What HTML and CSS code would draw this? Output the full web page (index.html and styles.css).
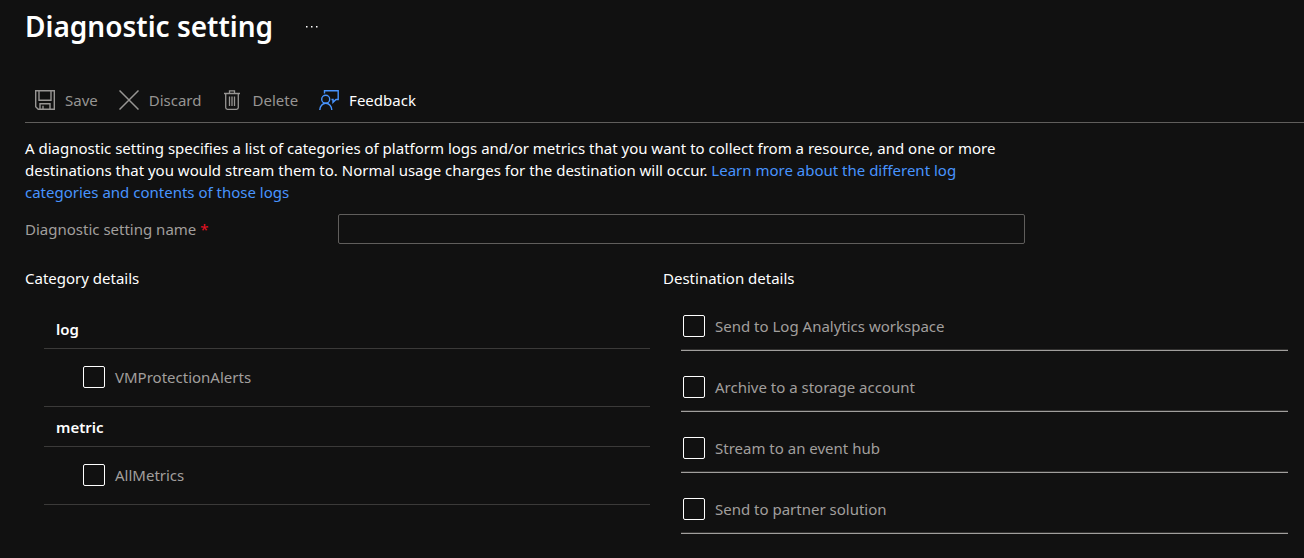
FILE: index.html
```html
<!DOCTYPE html>
<html lang="en">
<head>
<meta charset="utf-8">
<meta name="viewport" content="width=device-width, initial-scale=1">
<title>Diagnostic setting</title>
<link rel="stylesheet" href="styles.css">
</head>
<body>
<header class="header">
  <h1 class="title">Diagnostic setting</h1>
  <button class="more" type="button" aria-label="More actions">
    <svg width="16" height="4" viewBox="0 0 16 4" fill="#fff"><path d="M1 2h1.500v1.500H1zM6 2h1.500v1.500H6zM11 2h1.500v1.500H11z"/></svg>
  </button>
</header>
<div class="toolbar" role="toolbar" aria-label="Diagnostic setting actions">
  <button class="command" type="button" disabled>
    <svg class="icon" viewBox="0 0 20 20" fill="none" stroke="currentColor" stroke-width="1.4"><path d="M.7.7h18.6v18.6H3.2L.7 16.8zM4 .7v9.6h12V.7M5 19.3v-5.6h10v5.6M8 19v-3.2"/></svg>
    Save
  </button>
  <button class="command" type="button" disabled>
    <svg class="icon" viewBox="0 0 20 20" fill="none" stroke="currentColor" stroke-width="1.5"><path d="M.5.5l19 19M19.500.5l-19 19"/></svg>
    Discard
  </button>
  <button class="command" type="button" disabled>
    <svg class="icon" viewBox="0 0 20 20" fill="none" stroke="currentColor" stroke-width="1.3"><path d="M2 3.500h16M7.500 3.500V.8h5v2.700M3.700 3.500v14q0 1.800 1.800 1.800h9q1.800 0 1.800-1.800v-14M7.500 6.500v9.500M10 6.500v9.500M12.500 6.500v9.500"/></svg>
    Delete
  </button>
  <button class="command command-active" type="button">
    <svg class="icon icon-blue" viewBox="0 0 20 20" fill="none" stroke="currentColor" stroke-width="1.4"><path d="M5.500 3.500V.8h13.700v8.700h-2.200l-3 2.800V9.500h-1.500"/><circle cx="6.700" cy="9.300" r="4"/><path d="M.8 20c0-3.900 2.700-6.700 6-6.700s6 2.800 6 6.700"/></svg>
    Feedback
  </button>
</div>
<main class="content">
  <div class="intro">
    <p class="description">A diagnostic setting specifies a list of categories of platform logs and/or metrics that you want to collect from a resource, and one or more destinations that you would stream them to. Normal usage charges for the destination will occur. <a class="link" href="#">Learn more about the different log categories and contents of those logs</a></p>
    <div class="field">
      <label class="field-label" for="setting-name">Diagnostic setting name <span class="required">*</span></label>
      <input class="text-input" id="setting-name" type="text" required>
    </div>
  </div>
  <div class="columns">
    <section>
      <h2 class="section-title">Category details</h2>
      <div class="categories">
        <h3 class="group-title">log</h3>
        <div class="category"><label class="option"><input class="checkbox" type="checkbox">VMProtectionAlerts</label></div>
        <h3 class="group-title">metric</h3>
        <div class="category"><label class="option"><input class="checkbox" type="checkbox">AllMetrics</label></div>
      </div>
    </section>
    <section>
      <h2 class="section-title">Destination details</h2>
      <div class="destinations">
        <div class="destination"><label class="option"><input class="checkbox" type="checkbox">Send to Log Analytics workspace</label></div>
        <div class="destination"><label class="option"><input class="checkbox" type="checkbox">Archive to a storage account</label></div>
        <div class="destination"><label class="option"><input class="checkbox" type="checkbox">Stream to an event hub</label></div>
        <div class="destination"><label class="option"><input class="checkbox" type="checkbox">Send to partner solution</label></div>
      </div>
    </section>
  </div>
</main>
</body>
</html>
```
FILE: styles.css
```css
* {
  box-sizing: border-box;
}

body {
  margin: 0;
  padding-left: 25px;
  background: #111;
  color: #fff;
  font: 15px/22px "Segoe UI", "Noto Sans", "Open Sans", sans-serif;
}

button {
  padding: 0;
  border: 0;
  background: none;
  color: inherit;
  font: inherit;
}

.header {
  display: flex;
  align-items: center;
  gap: 32px;
  padding-top: 6px;
}

.title {
  margin: 0;
  font-size: 28px;
  line-height: 40px;
  font-weight: 600;
}

.more {
  display: flex;
}

.toolbar {
  display: flex;
  gap: 21px;
  margin-top: 32px;
  padding: 11px 10px;
  border-bottom: 1px solid #605e5c;
}

.command {
  display: flex;
  align-items: center;
  gap: 10px;
  color: #979593;
}

.command-active {
  color: #fff;
}

.icon {
  width: 20px;
  height: 20px;
}

.icon-blue {
  color: #4894fe;
}

.content {
  padding: 14px 16px 23px 0;
}

.intro {
  max-width: 1000px;
}

.description {
  margin: 0 0 11px;
}

.link {
  color: #4894fe;
  text-decoration: none;
}

.field {
  display: grid;
  grid-template-columns: 313px 1fr;
  align-items: center;
}

.field-label {
  color: #a19f9d;
}

.required {
  color: #e81123;
}

.text-input {
  width: 100%;
  height: 30px;
  padding: 0 8px;
  border: 1px solid #605e5c;
  border-radius: 2px;
  background: #111;
  color: #fff;
  font: inherit;
}

.columns {
  display: grid;
  grid-template-columns: 1fr 1fr;
  gap: 13px;
  margin-top: 23px;
}

.section-title {
  margin: 0;
  font-size: 15px;
  font-weight: 400;
}

.categories {
  margin: 20px 0 0 19px;
}

.group-title {
  margin: 0;
  padding: 9px 12px 8px;
  border-bottom: 1px solid #3b3a39;
  font-size: 15px;
  font-weight: 600;
}

.category {
  padding: 17px 39px 18px;
  border-bottom: 1px solid #3b3a39;
}

.option {
  display: flex;
  align-items: center;
  gap: 10px;
  color: #a19f9d;
}

.checkbox {
  appearance: none;
  width: 22px;
  height: 22px;
  margin: 0;
  border: 1px solid #fff;
  border-radius: 2px;
}

.checkbox:checked {
  background: #4894fe;
}

.destinations {
  margin: 1px 0 0 18px;
}

.destination {
  padding: 25px 2px 13px;
  border-bottom: 1px solid #a19f9d;
  box-shadow: inset 0 -1px #323130;
}
```
